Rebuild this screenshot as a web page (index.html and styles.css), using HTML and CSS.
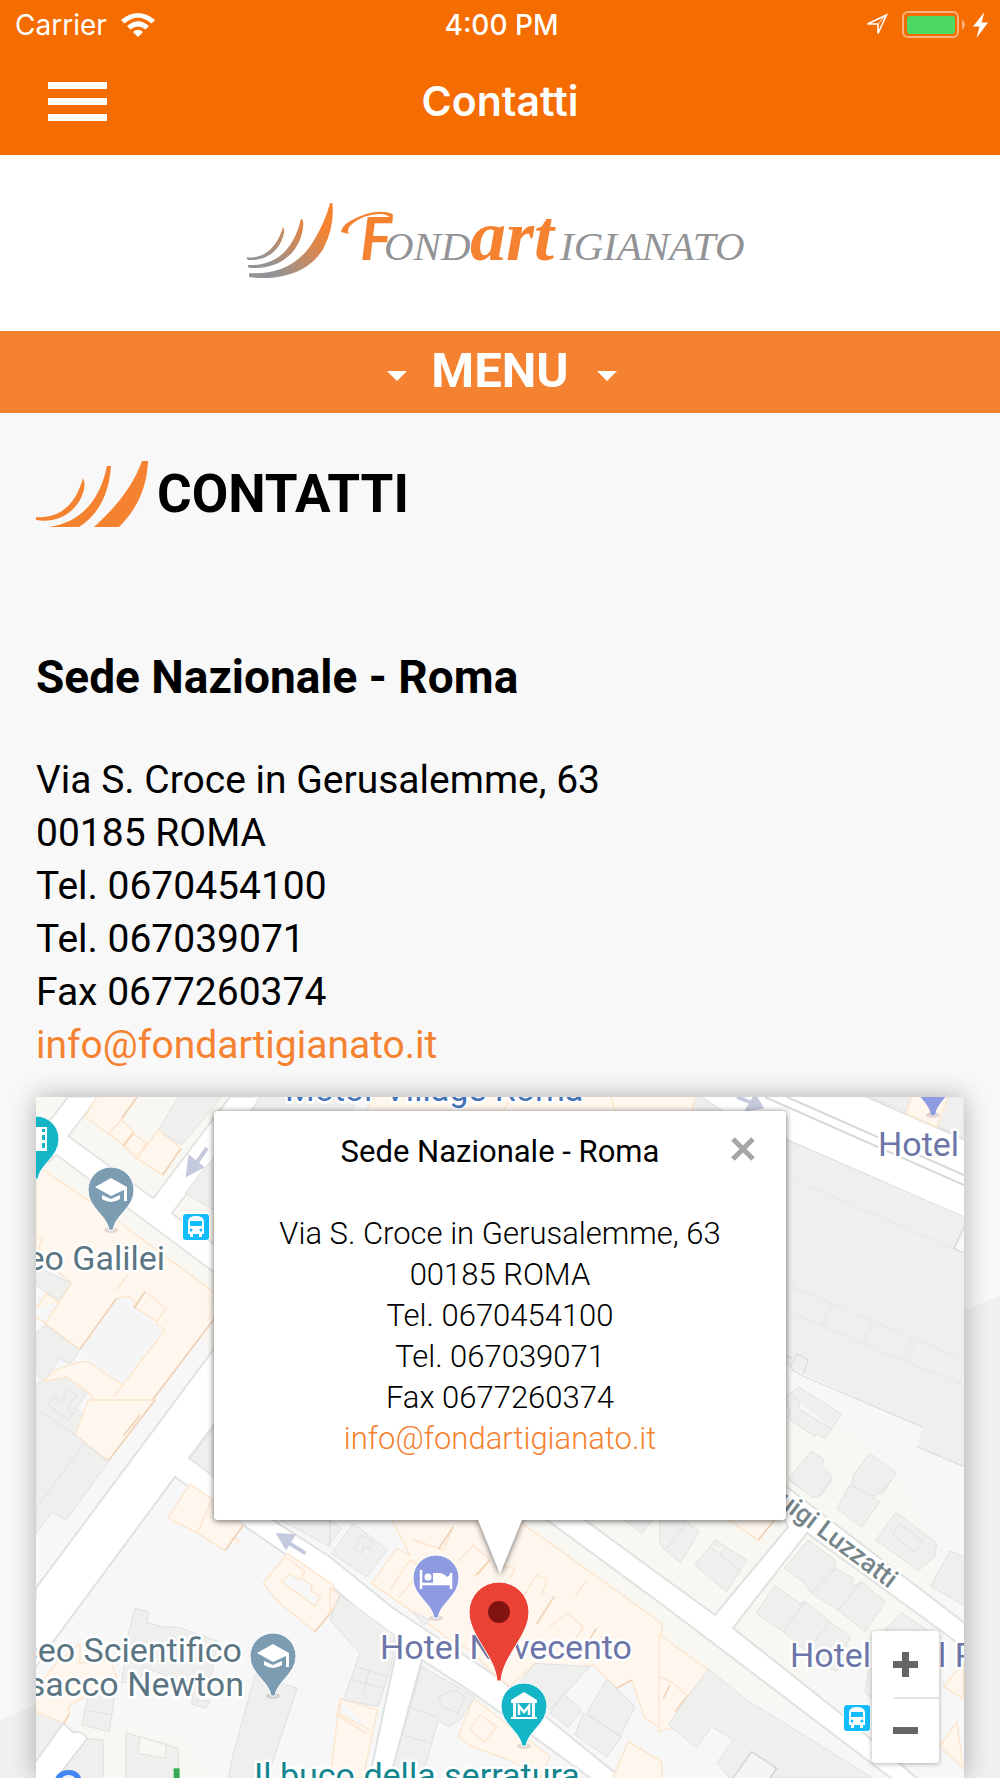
FILE: index.html
```html
<!DOCTYPE html>
<html lang="it">
<head>
<meta charset="utf-8">
<meta name="viewport" content="width=device-width, initial-scale=1">
<title>Contatti</title>
<link rel="stylesheet" href="styles.css">
</head>
<body>
<header class="app-header">
  <div class="status">
    <div class="status-left">
      <span>Carrier</span>
      <svg class="wifi" viewBox="0 0 34 24" width="34" height="24" aria-hidden="true">
        <path fill="#fff" d="M0 7Q17-7 34 7L30.500 10.500Q17-1 3.500 10.500ZM6 13Q17 3.500 28 13L24.500 16.500Q17 10.500 9.500 16.500ZM12 19Q17 14.500 22 19L17 24Z"/>
      </svg>
    </div>
    <span class="status-time">4:00 PM</span>
    <div class="status-right">
      <svg viewBox="0 0 24 24" width="24" height="24" aria-hidden="true"><path fill="none" stroke="#fff" stroke-width="1.600" d="M2.500 11 21.500 2 13 20.500V11Z"/><path stroke="#fff" d="M13 11 21 2"/></svg>
      <svg class="battery" viewBox="0 0 64 28" width="64" height="28" aria-hidden="true">
        <rect x="1" y="1" width="55" height="25" rx="5" fill="none" stroke="#ffb27d" stroke-width="2"/>
        <rect x="5" y="5" width="48" height="18" rx="3" fill="#4cd964"/>
        <path d="M60 8.500Q63 11 63 13.500T60 19Z" fill="#ffb27d"/>
      </svg>
      <svg viewBox="0 0 15 26" width="15" height="26" aria-hidden="true"><path fill="#fff" d="M11.500 0 0 14.500H6.500L3.500 26 15 10.500H8.500Z"/></svg>
    </div>
  </div>
  <div class="nav">
    <button class="burger" type="button" aria-label="Apri menu"><span></span><span></span><span></span></button>
    <div class="nav-title">Contatti</div>
  </div>
</header>

<div class="brand">
  <svg class="logo" viewBox="235 190 530 100" role="img" aria-label="Fondartigianato">
    <defs>
      <linearGradient id="wave" gradientUnits="userSpaceOnUse" x1="270" y1="110" x2="130" y2="250">
        <stop offset="0" stop-color="#f58230"/><stop offset="1" stop-color="#929396"/>
      </linearGradient>
    </defs>
    <g fill="url(#wave)" transform="translate(230 190) scale(.338 .3333)">
      <path d="M296 39H303Q310 110 276 176C238 242 160 273 58 262Q54 256 58 249C140 254 203 225 246 155Q283 93 296 39Z"/>
      <path d="M210 86Q219 88 216 110C210 182 150 242 56 233Q50 229 54 225C136 230 190 176 210 86Z"/>
      <path d="M157 111Q161 117 160 128C150 177 112 214 54 210Q48 206 50 202C105 208 141 166 157 111Z"/>
    </g>
    <path fill="#f58230" d="M341 232Q342 226 350 221Q370 210 385 212Q394 213 393 216L391 219Q388 214 380 214Q364 214 352 224Q346 229 349 234Z"/>
    <g class="logo-text">
      <text class="logo-f" x="360" y="260">F</text>
      <text class="logo-grey" x="384" y="260">OND</text>
      <text class="logo-art" x="470" y="260">art</text>
      <text class="logo-grey" x="560" y="260">IGIANATO</text>
    </g>
  </svg>
</div>

<button class="menu-bar" type="button">
  <span class="caret"></span><span class="menu-label">MENU</span><span class="caret"></span>
</button>

<main class="page">
  <h1 class="page-title">
    <svg viewBox="0 0 113 66" width="113" height="66" aria-hidden="true">
      <g fill="#f58230">
        <path d="M106 0H112C111 27 101 48 83 66H58C81 45 97 25 106 0Z"/>
        <path d="M71 5H75C73 34 62 54 43 66H12C45 62 64 39 71 5Z"/>
        <path d="M47 17Q50 24 47 32C41 50 23 63 0 59V56C24 58 40 43 47 17Z"/>
      </g>
    </svg>
    <span>CONTATTI</span>
  </h1>
  <h2 class="office">Sede Nazionale - Roma</h2>
  <address class="address">
    Via S. Croce in Gerusalemme, 63<br>
    00185 ROMA<br>
    Tel. 0670454100<br>
    Tel. 067039071<br>
    Fax 0677260374<br>
    <a href="mailto:info@fondartigianato.it">info@fondartigianato.it</a>
  </address>

  <section class="map" aria-label="Mappa">
    <svg class="map-art" viewBox="36 1097 928 681" preserveAspectRatio="xMidYMin slice">
      <defs>
        <path id="drop" d="M-2 0C-4-15-23-22-23-40A23 23 0 1 1 23-40C23-22 4-15 2 0Z"/>
        <g id="bus">
          <rect x="-14" y="-14" width="28" height="28" rx="4" fill="#fff"/>
          <rect x="-13" y="-13" width="26" height="26" rx="3" fill="#12bcff"/>
          <path fill="#fff" d="M-8-6Q-7-11 0-11T8-6V7H6V10H3V7H-3V10H-6V7H-8Z"/>
          <path fill="#12bcff" d="M-6-6H6V-1H-6Z"/><circle cx="-5" cy="3" r="1.500" fill="#12bcff"/><circle cx="5" cy="3" r="1.500" fill="#12bcff"/>
        </g>
        <g id="school">
          <ellipse cy="0" rx="7" ry="3" fill="#000" opacity=".12"/>
          <use href="#drop" fill="#7b9cb1" stroke="#fff" stroke-width="1"/>
          <path fill="#fff" d="M-16-43 0-52 16-43V-29H13V-40L0-34ZM-9-35 0-31 9-35V-31Q0-25-9-31Z"/>
        </g>
      </defs>
      <rect x="36" y="1097" width="928" height="681" fill="#f7f7f7"/>

      <!-- Land tint -->
      <path fill="#f8f7f1" d="M36 1097H330L215 1355 36 1170ZM530 1515 660 1520 700 1480 790 1420 850 1430 900 1480 940 1560 920 1630 830 1650 780 1710 620 1640 500 1540ZM80 1722 180 1738 210 1778H60Z"/>

      <!-- Roads -->
      <g class="road" transform="translate(0 1080) scale(.33333)">
        <path d="M108 175 205 50H295L205 168 460 355 690 50H785L515 400 660 505V590L170 225 108 275Z"/>
      </g>
      <g class="road">
        <path d="M36 1588 260 1287 300 1310 189 1458 273 1520 330 1557 393 1608 497 1677 630 1785H600L473 1693 422 1660 388 1785H368L398 1643 330 1585 243 1525 175 1477 53 1642 30 1675Z"/>
        <path d="M547 1520 500 1485 530 1480 585 1520 660 1575 715 1615 788 1527 760 1465 787 1487 970 1627V1652L807 1533 733 1628 840 1713 925 1785H900L660 1603Z"/>
        <path d="M640 1070 810 1075 867 1097 970 1142V1220L787 1140 720 1115Z"/>
      </g>
      <path class="rail" d="M787 1097 964 1175M765 1097 964 1185"/>

      <!-- North-west blocks -->
      <g transform="translate(0 1080) scale(.33333)">
        <g class="grey">
          <path d="M535 50H665L600 130 545 195 475 150Z"/>
          <path d="M615 262 660 215V400L555 340Z"/>
          <path d="M108 560 215 610 175 660 108 615Z"/>
          <path d="M135 735 240 810 210 853 180 835 130 905 108 880V760Z"/>
          <path d="M108 910 130 905 200 890 262 938 230 985 255 1010 240 1060H108Z"/>
          <path d="M205 925 230 945 200 985 220 1000 205 1020 145 975 165 950 185 965Z"/>
          <path d="M785 40H1080L1050 100H750Z"/>
          <path d="M2090 40H2040V100H2180Z"/>
        </g>
        <g class="shop">
          <path d="M1130 40H2090L2070 110H1090ZM1540 40 1500 110M1830 40 1850 110"/>
          <path d="M290 50H412L365 120 330 165 255 110Z"/>
          <path d="M365 120 400 155 370 195 325 160ZM400 160 440 190 410 235 370 195Z"/>
          <path d="M475 150 543 205 488 285 410 235Z"/>
          <path d="M108 255 300 385 640 635 655 700 385 1055H300L330 1010 285 960 265 938 200 890 130 905 165 870 240 845 265 845 368 915 495 750 470 735V710L385 650 350 655 240 808 135 730 215 610 108 520Z"/>
          <path d="M350 630 385 580M435 635 498 685 470 725 400 680ZM108 465 125 480 115 510 180 580M108 685 140 640 175 665M108 710 135 730M330 1010 300 1050M368 915 340 950"/>
        </g>
        <path fill="#f5f5f5" d="M350 658 490 750 368 912 268 845 240 808Z"/>
        <path class="edge" d="M655 700 385 1055M350 655 240 808M435 635 403 685M412 50 365 115M400 160 370 198M543 205 488 285"/>
      </g>

      <!-- West and south-west blocks -->
      <g transform="translate(0 1400) scale(.33333)">
        <path class="shop" d="M265 0H465L325 182 225 105Z"/>
        <path class="edge" d="M465 0 325 182M370 108 420 45"/>
        <g class="grey">
          <path d="M108 25 225 105 325 185 198 362 158 335 108 400Z"/>
          <path d="M108 325 250 135"/>
          <path d="M570 175 660 60V245Z"/>
          <path d="M405 625 447 635 440 668 485 680 535 682 655 725 635 820 590 905 630 900 618 925 575 912 580 860 430 800 425 830 365 850 385 700Z"/>
          <path d="M265 885 345 880 328 995 245 975ZM252 930 335 945"/>
          <path d="M765 825 892 865 800 1140H685L695 1080Z"/>
          <path d="M378 998 535 1045V1140H378ZM420 1010 415 1060 495 1075 500 1030"/>
          <path d="M250 1015 310 1020V1140H165L225 1050Z"/>
          <path d="M840 360H990V440Z"/>
        </g>
        <g class="shop">
          <path d="M570 252 640 300 730 375 675 452 590 398 503 355ZM635 300 592 398M700 410 718 422 705 435"/>
          <path d="M862 460 1000 555V630L945 695 835 605 790 550ZM862 475 915 515 900 540 870 522 845 545 945 618 962 590 935 575V555L905 535"/>
          <path d="M108 860 180 780 240 730 240 790 330 780 350 830 205 920 208 940 192 970 108 935Z"/>
        </g>
        <path class="edge" d="M945 695 1000 628M675 452 730 375M192 970 208 940"/>
        <path fill="#efefef" d="M108 940 190 970 108 1085Z"/>
        <path fill="#fff" stroke="#dddfe0" stroke-width="5" d="M100 1095 190 970 220 998Q245 990 262 1015L165 1140H100Z"/>
        <path class="arrow" d="M917 460 860 425M838 406 878 408 858 440Z"/>
      </g>

      <!-- South blocks -->
      <g transform="translate(330 1480) scale(.33333)">
        <g class="shop">
          <path d="M185 118H560L995 430V745L945 715 925 660 905 600 860 625 790 555 680 570 615 550 540 620 500 590 420 510 360 480 225 380 125 310 200 205 240 225Z"/>
          <path d="M250 180 340 210 370 140M180 330 240 240 285 265M205 355 290 250M385 245 430 195 480 240 430 290M500 255 555 265 540 295M530 330 580 350 620 285 650 300 635 350M660 440 710 400 760 440 730 490M735 350 770 300"/>
          <path d="M30 655 142 690 100 894H0ZM35 665 25 700 120 750M15 700 110 760"/>
          <path d="M430 655 660 830 630 894 540 840 425 800 385 770 400 730ZM450 705 500 740 465 785 420 750Z"/>
          <path d="M895 785 995 845V900H845Z"/>
          <path d="M0 325 30 345 0 400Z"/>
        </g>
        <g class="grey">
          <path d="M70 130 172 210 110 290 5 220ZM95 165 130 185 120 205 100 200 95 220 70 210Z"/>
          <path d="M0 120 35 145 0 190Z"/>
          <path d="M30 345 195 465 185 550 145 680 40 660 90 520 0 420ZM80 560 170 590M70 600 160 625M120 565 100 640"/>
          <path d="M275 560 435 650 390 720 355 740 325 720 275 894H180ZM375 630 405 650 385 700 335 680 325 650ZM230 680 320 710M215 765 290 785"/>
          <path d="M615 550 780 560 660 690 560 620Z"/>
          <path d="M700 640 755 690 715 742 660 700ZM830 598 915 680 870 770 770 700ZM760 698 875 770 830 830 735 765ZM250 395 300 420 280 435Z"/>
          <path d="M880 118H970L935 160Z"/>
        </g>
        <path class="edge" d="M370 140 325 208M480 240 440 285M672 350 620 432M800 445 765 500M905 600 860 625"/>
      </g>

      <!-- South-east blocks -->
      <g transform="translate(660 1480) scale(.33333)">
        <path class="shop" d="M-3 463 145 570 45 740 -3 755ZM205 118H345L295 180ZM910 550 850 620 910 655ZM890 725 840 800 910 865ZM0 590 40 610 85 650"/>
        <path class="edge" d="M345 118 295 180M30 615 10 655M80 650 45 695"/>
        <g class="grey">
          <path d="M0 118H70L118 155 62 248 15 210 0 190ZM75 135 15 210"/>
          <path d="M165 180 260 240 200 335 105 255ZM155 205 180 220 195 200M180 225 245 275"/>
          <path d="M445 180 525 240 525 265 580 295 575 320 605 305 677 367 615 455 535 390 455 340 430 305 373 265ZM525 265 455 340M605 305 535 390"/>
          <path d="M345 318 420 370 435 365 510 425 570 470 530 575 470 540 370 455 288 400ZM435 365 370 455M510 425 450 500"/>
          <path d="M385 0H515L485 45 455 48Z"/>
          <path d="M570 15 660 65 605 142 530 85ZM595 0H695L665 45Z"/>
          <path d="M708 97 830 190 825 230 775 272 648 180ZM720 130 790 185 765 218 698 165Z"/>
          <path d="M870 213 915 230V378L812 318Z"/>
          <path d="M725 398 800 450 780 490 675 450ZM625 565 680 570 670 670 615 640Z"/>
          <path d="M90 640 145 567 260 660 640 894H210L170 850 220 780 155 740 110 802 25 735Z"/>
        </g>
        <path fill="#f5f5f5" stroke="#cfd2d4" stroke-width="4" d="M215 900 275 815 350 865 325 900Z"/>
      </g>

      <!-- North-east blocks -->
      <g transform="translate(760 1080) scale(.33333)">
        <path fill="#efefef" d="M60 172 612 412V1160L470 1100 490 1042 60 850Z"/>
        <path class="outline" d="M470 1100 612 1160M490 1042 130 888 97 870 93 855 112 822 145 840 130 882M75 825 97 835"/>
        <path class="faint" d="M75 288 612 520M75 610 95 620 612 840M75 690 430 843 612 915M210 672 185 738M218 676 193 742M333 725 305 788M341 729 313 792M453 780 428 840M465 784 440 844M612 870 595 913"/>
        <path fill="#f7f7f7" stroke="#d6d8d9" stroke-width="4" d="M615 435 582 505 615 520Z"/>
        <g class="grey">
          <path d="M118 922 245 1003 195 1075 170 1060 165 1070 85 1015 90 985 75 980V950ZM100 950 120 965 115 985 215 1048"/>
          <path d="M155 1113 192 1140 185 1160 218 1190 175 1250 155 1252 85 1195Z"/>
          <path d="M330 1120 410 1180 375 1220 345 1250 275 1215 280 1185Z"/>
          <path d="M330 50H612V175L395 75Z"/>
        </g>
        <path class="shop" d="M455 50H565L530 142 438 100Z"/>
      </g>

      <path class="arrow" d="M207 1148 195 1165M188 1174 190 1158 201 1167ZM737 1097 752 1103M761 1107 748 1109 755 1097Z"/>

      <!-- Points of interest -->
      <use href="#bus" x="196" y="1227"/>
      <use href="#bus" x="857" y="1718"/>
      <use href="#school" x="111" y="1230"/>
      <use href="#school" x="273" y="1696"/>
      <g transform="translate(36 1179)">
        <use href="#drop" fill="#14b5c6" stroke="#fff"/>
        <path fill="#fff" d="M0-52H11V-28H0Z"/><path fill="#14b5c6" d="M6-50h3v3H6zM6-44h3v5H6zM6-36h3v5H6z"/>
      </g>
      <g transform="translate(933 1115)">
        <ellipse cy="0" rx="7" ry="3" fill="#000" opacity=".12"/>
        <use href="#drop" fill="#8f9be0"/>
      </g>
      <g transform="translate(436 1618)">
        <ellipse cy="0" rx="7" ry="3" fill="#000" opacity=".12"/>
        <use href="#drop" fill="#8f9be0" stroke="#fff"/>
        <path stroke="#fff" stroke-width="2.500" fill="none" d="M-15-48V-29M15-45V-29M-15-34H15"/>
        <circle cx="-8" cy="-41" r="3.500" fill="#fff"/><path fill="#fff" d="M-3-45H4Q9-44 11-41L15-44V-34H-3Z"/>
      </g>

      <g class="poi">
        <text x="285" y="1101" fill="#4272b8">Motor Village Roma</text>
        <text x="878" y="1156" fill="#6d76a8">Hotel</text>
        <text x="165" y="1270" text-anchor="end" fill="#5b7682">eo Galilei</text>
        <text x="242" y="1662" text-anchor="end" fill="#5b7682">ceo Scientifico</text>
        <text x="244" y="1696" text-anchor="end" fill="#5b7682">sacco Newton</text>
        <text x="380" y="1659" fill="#6d76a8">Hotel Novecento</text>
        <text x="790" y="1667" fill="#6d76a8">Hotel</text>
        <text x="938" y="1667" fill="#6d76a8">l R</text>
        <text x="254" y="1787" fill="#12858f">Il buco della serratura</text>
        <text class="street" transform="translate(889 1589) rotate(37)" text-anchor="end">Luigi Luzzatti</text>
      </g>

      <g transform="translate(524 1746)">
        <ellipse cy="0" rx="7" ry="3" fill="#000" opacity=".12"/>
        <use href="#drop" fill="#14b5c6" stroke="#fff"/>
        <path fill="#fff" d="M0-54 13-46V-43H11V-29H13V-27H-13V-29H-11V-43H-13V-46Z"/>
        <path fill="#14b5c6" d="M-8-43H8V-29H-8Z"/>
        <path stroke="#fff" stroke-width="2.500" fill="none" d="M-5-31V-40L0-34 5-40V-31"/>
      </g>
      <path fill="#ea4335" stroke="#fff" d="M497 1681C495 1655 469 1636 469 1612A30 30 0 1 1 529 1612C529 1636 503 1655 501 1681Z"/>
      <circle cx="499" cy="1612" r="11" fill="#811411"/>

      <text class="google" x="51" y="1806"><tspan fill="#4285f4">G</tspan><tspan fill="#ea4335">o</tspan><tspan fill="#fbbc05">o</tspan><tspan fill="#4285f4">g</tspan><tspan fill="#34a853">l</tspan><tspan fill="#ea4335">e</tspan></text>
    </svg>

    <div class="info">
      <div class="info-title">Sede Nazionale - Roma</div>
      <div class="info-body">
        Via S. Croce in Gerusalemme, 63<br>
        00185 ROMA<br>
        Tel. 0670454100<br>
        Tel. 067039071<br>
        Fax 0677260374<br>
        <a href="mailto:info@fondartigianato.it">info@fondartigianato.it</a>
      </div>
      <button class="info-close" type="button" aria-label="Chiudi">
        <svg viewBox="0 0 24 24" width="24" height="24"><path stroke="#a6a6a6" stroke-width="5" d="M2 2 22 22M22 2 2 22"/></svg>
      </button>
      <svg class="info-tail" viewBox="0 0 44 54" width="44" height="54" aria-hidden="true"><path fill="#fff" d="M0 0H44L22 54Z"/></svg>
    </div>

    <div class="zoom">
      <button type="button" aria-label="Zoom avanti"><svg viewBox="0 0 25 25" width="25" height="25"><path fill="#666" d="M9 0H16V9H25V16H16V25H9V16H0V9H9Z"/></svg></button>
      <button type="button" aria-label="Zoom indietro"><svg viewBox="0 0 25 25" width="25" height="25"><path fill="#666" d="M0 9H25V16H0Z"/></svg></button>
    </div>
  </section>
</main>
</body>
</html>
```

FILE: styles.css
```css
* { box-sizing: border-box; }

body {
  margin: 0;
  min-height: 100vh;
  display: flex;
  flex-direction: column;
  background: #f8f8f8;
  color: #000;
  font-family: Roboto, "Liberation Sans", sans-serif;
}

button {
  margin: 0;
  padding: 0;
  border: 0;
  background: none;
  font: inherit;
  color: inherit;
}

svg { display: block; }

a { color: #f58230; text-decoration: none; }

/* App header */
.app-header {
  height: 155px;
  background: #f56c00;
  color: #fff;
  font-family: Inter, "Liberation Sans", sans-serif;
}

.status {
  display: grid;
  grid-template-columns: 1fr auto 1fr;
  align-items: center;
  height: 50px;
  padding: 0 12px 0 15px;
  font-size: 28px;
}

.status-left { display: flex; align-items: center; gap: 14px; }
.status-time { font-weight: 500; }

.status-right {
  display: flex;
  align-items: center;
  justify-content: flex-end;
  gap: 7px;
}

.battery { margin-left: 6px; }

.nav {
  display: grid;
  grid-template-columns: 1fr auto 1fr;
  align-items: center;
  height: 102px;
  padding: 0 48px;
}

.nav-title { font-size: 41px; font-weight: 600; }

.burger {
  display: flex;
  flex-direction: column;
  gap: 9px;
  width: 59px;
}

.burger span { height: 7px; background: #fff; }

/* Brand */
.brand {
  display: flex;
  justify-content: center;
  padding: 35px 0 41px;
  background: #fff;
}

.logo { width: 530px; height: 100px; }
.logo-text { font-family: "Liberation Serif", serif; font-style: italic; }
.logo-grey { font-size: 41px; fill: #929396; }
.logo-f { font-family: Lato, sans-serif; font-size: 60px; font-weight: 700; fill: #f58230; }
.logo-art { font-size: 72px; font-weight: 700; fill: #f58230; }

/* Menu bar */
.menu-bar {
  display: flex;
  justify-content: center;
  align-items: center;
  gap: 24px;
  height: 82px;
  padding-left: 4px;
  background: #f58230;
  color: #fff;
  font-size: 49px;
  font-weight: 700;
}

.menu-label { margin-right: 4px; padding-bottom: 4px; }

.caret {
  margin-top: 8px;
  border: 10px solid transparent;
  border-top-color: #fff;
  border-bottom: 0;
}

/* Page */
.page {
  flex: 1;
  display: flex;
  flex-direction: column;
  padding: 48px 36px 0;
  overflow: hidden;
  background: linear-gradient(157deg, #f8f8f8 calc(50% + 379px), #f0f0f0 calc(50% + 380px));
}

.page-title {
  display: flex;
  align-items: center;
  gap: 8px;
  margin: 0;
  height: 66px;
  font-size: 53px;
  font-weight: 700;
}

.office {
  margin: 123px 0 50px;
  font-size: 46px;
  line-height: 54px;
  font-weight: 700;
}

.address {
  margin-bottom: 25px;
  font-size: 39px;
  line-height: 53px;
  font-style: normal;
}

/* Map */
.map {
  position: relative;
  flex: 1;
  min-height: 681px;
  box-shadow: 0 0 24px rgba(0, 0, 0, .3);
}

.map-art {
  position: absolute;
  inset: 0;
  width: 100%;
  height: 100%;
  overflow: hidden;
}

.road path { fill: #fff; stroke: #e0e1e1; stroke-width: 2; }
.road[transform] path { stroke-width: 5; }
.rail { fill: none; stroke: #d5d8da; stroke-width: 2; }
.grey path { fill: #efefee; stroke: #dfe0e1; stroke-width: 3; }
.shop path, path.shop { fill: #fff6ee; stroke: #fde5cc; stroke-width: 4; }
.edge { fill: none; stroke: #efd3b8; stroke-width: 5; }
.outline { fill: none; stroke: #dcdddd; stroke-width: 4; }
.faint { fill: none; stroke: #e6e6e6; stroke-width: 3; }
.arrow { fill: #c5c9dd; stroke: #c5c9dd; stroke-width: 4; }
g[transform] .arrow { stroke-width: 12; }

.poi text {
  font-size: 34px;
  stroke: #fff;
  stroke-width: 5px;
  stroke-linejoin: round;
  paint-order: stroke;
}

.poi .street { font-size: 26px; font-weight: 500; fill: #76858a; }
.google { font-size: 50px; font-weight: 500; }

/* Info window */
.info {
  position: absolute;
  top: 14px;
  left: 50%;
  width: 572px;
  height: 409px;
  transform: translateX(-50%);
  padding-top: 20px;
  border-radius: 4px;
  background: #fff;
  text-align: center;
  font-size: 31px;
  line-height: 41px;
  filter: drop-shadow(0 1px 3px rgba(0, 0, 0, .6));
}

.info-title { margin-bottom: 41px; }
.info-body { font-weight: 300; }

.info-close {
  position: absolute;
  top: 26px;
  right: 31px;
}

.info-tail {
  position: absolute;
  top: 100%;
  left: 50%;
  margin-left: -22px;
}

/* Zoom control */
.zoom {
  position: absolute;
  right: 25px;
  bottom: 15px;
  display: flex;
  flex-direction: column;
  width: 67px;
  border-radius: 4px;
  background: #fff;
  box-shadow: 0 1px 5px rgba(0, 0, 0, .3);
}

.zoom button {
  display: flex;
  align-items: center;
  justify-content: center;
  height: 66px;
}

.zoom button + button {
  background: linear-gradient(#e2e2e2, #e2e2e2) right top / 45px 2px no-repeat;
}
```
